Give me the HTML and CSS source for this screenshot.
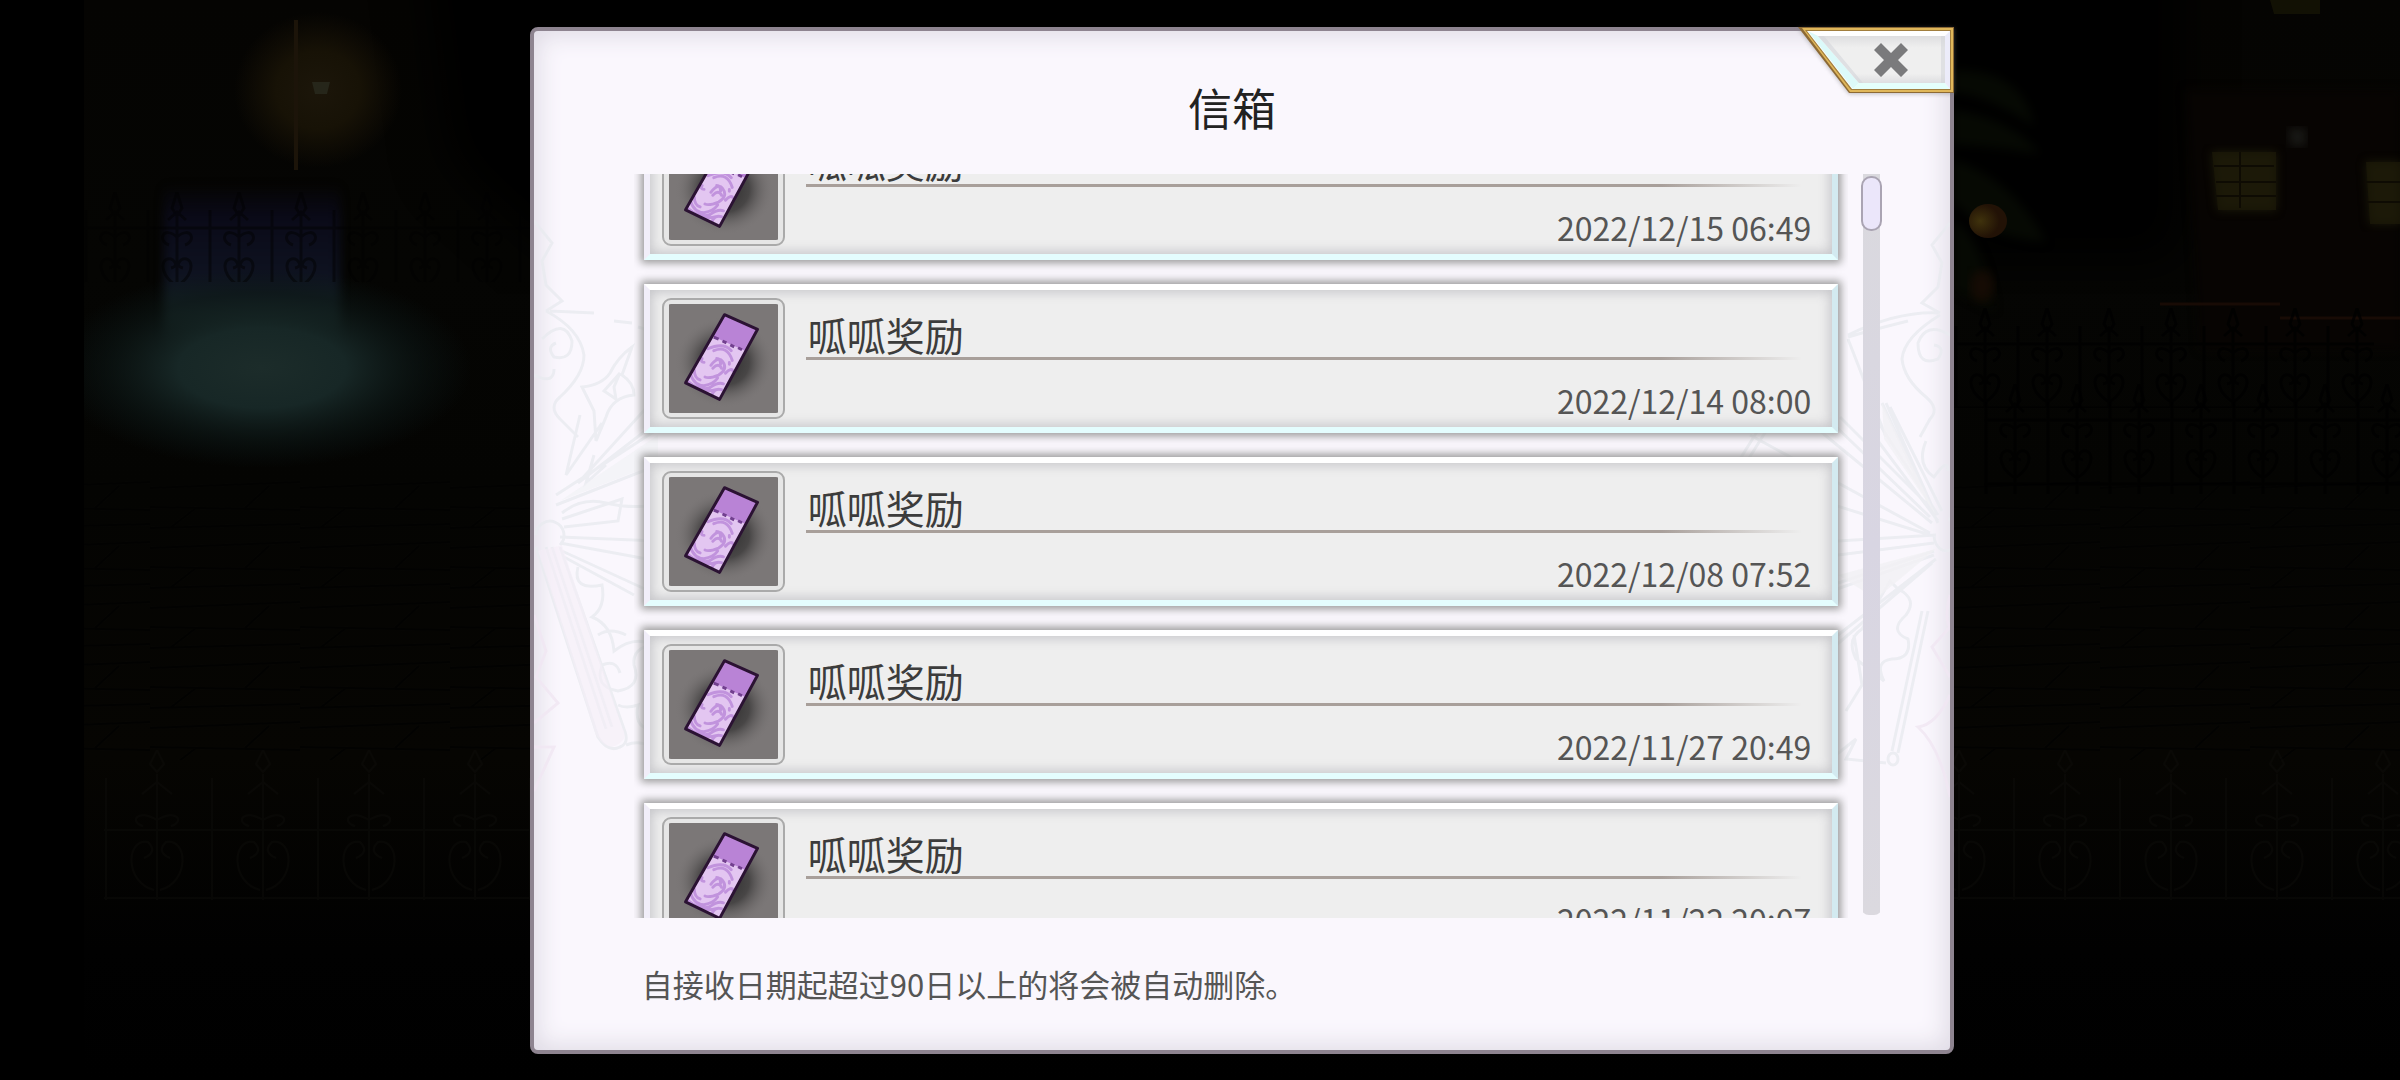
FILE: index.html
```html
<!DOCTYPE html>
<html lang="zh-CN">
<head>
<meta charset="utf-8">
<meta name="viewport" content="width=device-width, initial-scale=1">
<title>信箱</title>
<link rel="stylesheet" href="styles.css">
</head>
<body>
<svg class="scene" viewBox="0 0 2400 1080" preserveAspectRatio="xMidYMid slice" aria-hidden="true">
  <defs>
    <linearGradient id="ground" x1="0" y1="0" x2="0" y2="1">
      <stop offset="0" stop-color="#050402"/><stop offset=".25" stop-color="#050503"/><stop offset=".45" stop-color="#040402"/>
      <stop offset=".7" stop-color="#060502"/><stop offset=".88" stop-color="#010101"/><stop offset="1" stop-color="#000"/>
    </linearGradient>
    <radialGradient id="lamp"><stop offset="0" stop-color="#1c160a"/><stop offset=".5" stop-color="#171206"/><stop offset="1" stop-color="#171106" stop-opacity="0"/></radialGradient>
    <radialGradient id="pool"><stop offset="0" stop-color="#1c2c2a"/><stop offset=".4" stop-color="#172726"/><stop offset=".75" stop-color="#0c1615" stop-opacity=".6"/><stop offset="1" stop-color="#0a1414" stop-opacity="0"/></radialGradient>
    <radialGradient id="fruit" cx=".3"><stop offset="0" stop-color="#3f320c"/><stop offset="1" stop-color="#221206"/></radialGradient>
    <linearGradient id="veil" x1="0" y1="0" x2="0" y2="1">
      <stop offset="0" stop-color="#0b0a1c" stop-opacity="0"/><stop offset=".2" stop-color="#0a0a18"/><stop offset=".55" stop-color="#0e1220"/><stop offset=".8" stop-color="#182828"/><stop offset="1" stop-color="#182828" stop-opacity="0"/>
    </linearGradient>
    <filter id="soft" color-interpolation-filters="sRGB"><feGaussianBlur stdDeviation="5"/></filter>
    <filter id="haze" color-interpolation-filters="sRGB"><feGaussianBlur stdDeviation="26"/></filter>
    <clipPath id="view"><rect x="84" width="2316" height="1080"/></clipPath>
    <pattern id="fence" width="62" height="110" patternUnits="userSpaceOnUse">
      <path d="M31 0l-5 16 5 8 5-8zM31 20v90M0 36h62M0 100h62M2 18v92M31 45c-14-12-20 4-8 8M31 45c14-12 20 4 8 8M31 94c-22-14-14-32-4-26q6 6-2 8M31 94c22-14 14-32 4-26q-6 6 2 8M22 28l9-8 9 8" fill="none" stroke="#000" stroke-width="3"/>
    </pattern>
    <pattern id="rail" width="106" height="150" patternUnits="userSpaceOnUse">
      <path d="M53 0l-7 14 7 8 7-8zM53 24v126M0 80h106M0 148h106M2 28v122M53 70c-20-12-28 2-14 6M53 70c20-12 28 2 14 6M50 140c-30-8-28-52-6-48q10 10-4 16M56 140c30-8 28-52 6-48q-10 10 4 16M38 44l15-12 15 12" fill="none" stroke="#0e0d0a" stroke-width="2"/>
    </pattern>
    <pattern id="paving" width="150" height="60" patternUnits="userSpaceOnUse">
      <path d="M0 8l150-6M0 27l150 3M0 48l150-4M20 48l26-20M95 28l24-22" fill="none" stroke="#020201" stroke-width="2"/>
    </pattern>
  </defs>
  <rect width="2400" height="1080" fill="#000"/>
  <g clip-path="url(#view)">
    <rect x="84" width="2316" height="1080" fill="url(#ground)"/>
    <rect x="84" y="480" width="2316" height="280" fill="url(#paving)"/>
    <path d="M420 -80H2180V260H560L450 160z" fill="#000" filter="url(#haze)"/>
    <ellipse cx="318" cy="90" rx="84" ry="78" fill="url(#lamp)"/>
    <path d="M294 20h4v150h-4z" fill="#1c1409"/>
    <path d="M312 82h18l-3 12h-12z" fill="#26261a"/>
    <rect x="164" y="185" width="176" height="165" fill="url(#veil)" filter="url(#soft)"/>
    <ellipse cx="262" cy="368" rx="210" ry="100" fill="url(#pool)"/>
    <g transform="translate(84 192)" opacity=".45"><rect width="446" height="90" fill="url(#fence)"/></g>
    <path d="M2186 90h214v260h-200z" fill="#070402" filter="url(#soft)"/>
    <path d="M2212 152h64v58h-58zM2366 162h34v62h-30z" fill="#1c1a08" filter="url(#soft)"/>
    <path d="M2212 152h64v58h-58zM2366 162h34v62h-30z" fill="#1c1a08" opacity=".7"/>
    <path d="M2214 166h60M2216 182h60M2216 196h60M2240 152v56M2366 182h34M2366 202h34" stroke="#0e0b03" stroke-width="2"/>
    <path d="M2270 0h50v14h-46z" fill="#121104"/>
    <path d="M2288 128h18v18h-16z" fill="#181815" filter="url(#soft)"/>
    <path d="M2160 304h120M2280 318h120" stroke="#180b05" stroke-width="3"/>
    <g fill="#060903" filter="url(#soft)"><path d="M1954 70q70 0 80 56q-46-30-80-34zM1954 110q60 10 86 44q-50-8-86-10zM1954 160q60 20 92 82q-60-4-92-40zM1954 220q30 20 40 90l-40-20z"/></g>
    <ellipse cx="1988" cy="221" rx="19" ry="17" fill="url(#fruit)"/>
    <ellipse cx="1982" cy="286" rx="12" ry="16" fill="#150b04" filter="url(#soft)"/>
    <g transform="translate(1954 308)" opacity=".8"><rect width="420" height="100" fill="url(#fence)"/></g>
    <g transform="translate(1984 384)" opacity=".8"><rect width="416" height="110" fill="url(#fence)"/></g>
    <g transform="translate(104 750)"><rect width="2296" height="150" fill="url(#rail)" opacity=".45"/></g>
  </g>
</svg>
<main class="stage">
  <section class="panel" aria-labelledby="mail-title">
    <svg class="ornament ornament-left" viewBox="0 0 140 660" aria-hidden="true">
      <g fill="none" stroke="#e9ebf0" stroke-width="3">
        <path d="M0 26l18 22-10 18 4 24 16 16-16 10M12 116q34 18 38 44 0 20-24 42-12 10 0 22l18 18M8 144q22-22 30 2 0 20-18 16-8-10 2-14M0 180q20 10 20-6M16 116l44 2M80 126l18 2M104 132l20 6"/>
        <path d="M98 152l-10 28q12 8 12 20-22 2-28 22l-10 24-2-30q-8-16-12-24 20-2 28-14 8-16 22-26zM86 178l-6 14 2 12-12-8zM46 220l-14 60 36-52M124 200l-80 88 80-62M22 300l102-66M22 310l102-40M28 318q20-16 44-10t52 2M28 324l60-20-4 22-54 6M60 260l-8 28 20-18"/>
        <path d="M26 342l98 4M26 348l98 18M28 356l96 44M30 362l70 38" />
        <path d="M2 340a14 14 0 1 1 24 10M2 352l62 190q10 16 22 10 10-4 4-18L26 352M12 352l60 182M18 352l60 180"/>
        <path d="M44 372q-6 24 24 18 4 22-10 32 20 8 22 34 20-16 40-6-22 2-20 20 8 22-16 26-24-4-16-26 14-6 18 8M64 440q12-8 28 0M84 510q8 4 20 0-4 20 10 24M92 550q20-8 36 12"/>
      </g>
      <g fill="none" stroke="#f1e7f3" stroke-width="3"><path d="M0 420l12 36-10 26 22 26-24 20M0 552h20L0 596"/></g>
      <path d="M4 356l58 184q12 18 24 8 8-6 2-16L28 350z" fill="#f5edf7" opacity=".6"/>
      <path d="M26 306l98-66v28z" fill="#f0f1f4" opacity=".7"/>
    </svg>
    <svg class="ornament ornament-right" viewBox="0 0 400 660" aria-hidden="true">
      <g fill="none" stroke="#e9ebf0" stroke-width="3">
        <path d="M400 28l-18 22 10 18-4 24-16 16 18 10M388 118q-40-2-90 22M298 142q20-6 60-16M298 144l38 98M390 120q-36 22-38 44 2 20 24 38 14 12 4 22l-10 18M400 140q-24-14-32 8 0 24 20 16 8-12-4-14"/>
        <path d="M332 208l56 120M336 208l50 112M340 212l52 104M330 230l58 90M328 246l60 80M376 246q-10 24 8 36 14-20 14-6M290 222l90 90M280 226l100 96M270 236l112 92M200 240l180 98M220 290l160 50M288 346l98-6M288 360l96-12M288 388l96-32M270 400l114-40M288 440l98-76M270 464l112-96M384 340a12 16 0 1 0 14-16M180 280l30-48M186 284l30-48"/>
        <path d="M340 386l-28 48q-16 10-6 30l28 22q-10-20 8-22 20 0 16-20-20-8-2-24 12-16-8-26zM304 440l8 50-16 26M372 416l-30 140M378 416l-30 142M338 564a5 6 0 1 0 10 0 5 6 0 1 0-10 0M286 560l20-16-10 20 40 4"/>
      </g>
      <g fill="none" stroke="#f1e7f3" stroke-width="3"><path d="M400 400q-6 24 0 32l-18 20 18 30M400 500q-14 30-32 32 22 20 32 70"/></g>
      <path d="M332 208l54 112-52-76zM288 380l98-26-60 50z" fill="#f0f0f3" opacity=".8"/>
    </svg>
    <header class="panel-head">
      <h1 class="panel-title" id="mail-title">信箱</h1>
      <button class="close" type="button" aria-label="关闭">
        <svg viewBox="0 0 156 66" aria-hidden="true">
          <defs><linearGradient id="face" x1="0" y1="0" x2="0" y2="1"><stop offset="0" stop-color="#dedee0"/><stop offset=".25" stop-color="#efefef"/><stop offset=".8" stop-color="#efefef"/><stop offset="1" stop-color="#dedee0"/></linearGradient></defs>
          <path d="M0 0H156V66H51z" fill="#8d6a35"/>
          <path d="M4 1H155V65H52z" fill="#e0b75a"/>
          <path d="M7 3H153V63H53z" fill="#a17e3e"/>
          <path d="M9 4H152V62H54z" fill="#fff"/>
          <path d="M10 4l45 58 6-6L20 9z" fill="#dcfafa"/>
          <path d="M55 62h97l-5-6H61z" fill="#e4fffb"/>
          <path d="M152 4v58l-5-6V9z" fill="#ececfa"/>
          <path d="M20 9H147V56H61z" fill="url(#face)"/>
          <path d="M20 9l41 47h4L26 9zM147 9v47h-4V9z" fill="#d3d5da" opacity=".6"/>
          <path d="M83 16l10 10 10-10 7 7-10 10 10 10-7 7-10-10-10 10-7-7 10-10-10-10z" fill="#7a7a7c"/>
        </svg>
      </button>
    </header>
    <div class="mail">
      <ul class="mail-list">
        <li class="card"><svg class="item" viewBox="0 0 112 112"><use href="#ticket"/></svg><div class="info"><h2>呱呱奖励</h2><time datetime="2022-12-15T06:49">2022/12/15 06:49</time></div></li>
        <li class="card"><svg class="item" viewBox="0 0 112 112"><use href="#ticket"/></svg><div class="info"><h2>呱呱奖励</h2><time datetime="2022-12-14T08:00">2022/12/14 08:00</time></div></li>
        <li class="card"><svg class="item" viewBox="0 0 112 112"><use href="#ticket"/></svg><div class="info"><h2>呱呱奖励</h2><time datetime="2022-12-08T07:52">2022/12/08 07:52</time></div></li>
        <li class="card"><svg class="item" viewBox="0 0 112 112"><use href="#ticket"/></svg><div class="info"><h2>呱呱奖励</h2><time datetime="2022-11-27T20:49">2022/11/27 20:49</time></div></li>
        <li class="card"><svg class="item" viewBox="0 0 112 112"><use href="#ticket"/></svg><div class="info"><h2>呱呱奖励</h2><time datetime="2022-11-22T20:07">2022/11/22 20:07</time></div></li>
      </ul>
      <div class="track"><div class="thumb"></div></div>
    </div>
    <footer class="note"><p>自接收日期起超过90日以上的将会被自动删除。</p></footer>
  </section>
</main>
<svg class="symbols" aria-hidden="true">
  <defs>
    <radialGradient id="shade"><stop offset="0" stop-color="#2e2d2d"/><stop offset=".5" stop-color="#484646"/><stop offset="1" stop-color="#7b7777" stop-opacity="0"/></radialGradient>
    <clipPath id="stub"><path d="M57 11L91 26 52 98 17 81z"/></clipPath>
    <symbol id="ticket" viewBox="0 0 112 112">
      <rect width="112" height="112" fill="#7b7777"/>
      <ellipse cx="57" cy="60" rx="51" ry="47" fill="url(#shade)"/>
      <g clip-path="url(#stub)">
        <path d="M57 11L91 26 52 98 17 81z" fill="#e3c6f1"/>
        <path d="M57 11L91 26 78 48 44 33z" fill="#b983d6"/>
        <g fill="none" stroke="#c193dd" stroke-width="3" stroke-linecap="round">
          <path d="M46 48q14-6 19 10M40 46q16-7 24 2M43 63q8-10 12-4 6 8-4 14-10 4-14 2M45 66q6-6 9 0M53 62q0-6-4-6M58 71q6-6 8-2M34 56q-2 4 2 4M62 60v2M22 72q4 12 14 12 10-2 14-8M20 80q12 10 22 6 8-6 14-4M26 68q0 8 6 10M44 94q2-8 10-6M32 88q10 2 16 0"/>
        </g>
      </g>
      <path d="M46 34l5 2m4 2l4 2m4 2l4 2m4 1l4 2" stroke="#72408f" stroke-width="3"/>
      <path d="M57 11L91 26 52 98 17 81z" fill="none" stroke="#2b1233" stroke-width="3" stroke-linejoin="round"/>
    </symbol>
  </defs>
</svg>
</body>
</html>
```
FILE: styles.css
```css
* {
  box-sizing: border-box;
}

body {
  margin: 0;
  background: #000;
  color: #444;
  font-family: "Noto Sans CJK SC", "Noto Sans", sans-serif;
}

h1,
h2,
p,
ul {
  margin: 0;
  padding: 0;
  font-weight: 400;
}

.scene {
  position: fixed;
  inset: 0;
  width: 100%;
  height: 100%;
}

.symbols {
  position: absolute;
  width: 0;
  height: 0;
}

.stage {
  position: relative;
  display: flex;
  justify-content: center;
  height: 100vh;
  min-height: 600px;
  padding: 27px 0 26px 84px;
}

.panel {
  position: relative;
  display: flex;
  flex-direction: column;
  width: 61.5%;
  min-width: 900px;
  border: 4px solid #8e8490;
  border-radius: 8px;
  background: #faf7fd;
  box-shadow: inset 0 0 24px 4px #dedae4;
}

.ornament {
  position: absolute;
  top: 164px;
  height: 660px;
  opacity: .8;
}

.ornament-left {
  left: 0;
}

.ornament-right {
  right: 0;
}

.panel-head {
  flex: none;
  height: 143px;
  padding: 46px 20px 0 0;
  text-align: center;
}

.panel-title {
  color: #222;
  font-size: 44px;
  line-height: 60px;
}

.close {
  position: absolute;
  top: -4px;
  right: -4px;
  width: 156px;
  height: 66px;
  padding: 0;
  border: 0;
  background: none;
  filter: drop-shadow(0 1px 2px #7777);
  cursor: pointer;
}

.close svg {
  display: block;
}

.mail {
  position: relative;
  display: flex;
  flex: 1;
  gap: 13px;
  min-height: 0;
  padding: 0 68px 0 100px;
}

.mail-list {
  display: flex;
  flex: 1;
  flex-direction: column;
  gap: 24px;
  padding: 0 10px;
  overflow: hidden;
  list-style: none;
}

.card {
  display: flex;
  flex: none;
  gap: 21px;
  height: 149px;
  padding: 8px 21px 0 12px;
  border: 6px solid;
  border-color: #fff #d3eaf0 #e4fdfe #f1eef9;
  background: #eee;
  box-shadow: 0 0 8px 3px #999, inset 0 0 12px 2px #c4c4c8;
}

/* the list opens scrolled part way into its first card */
.card:first-child {
  margin-top: -63px;
}

.item {
  flex: none;
  width: 123px;
  height: 121px;
  padding: 4px;
  border: 2px solid #aaa;
  border-radius: 9px;
  background: #e6e6e6;
}

.info {
  flex: 1;
  padding-top: 13px;
}

.info h2 {
  padding-left: 2px;
  border-bottom: 3px solid;
  border-image: linear-gradient(90deg, #a89f9a 0 85%, #a89f9a00 99%) 1;
  color: #3c3c3c;
  font-size: 39px;
  line-height: 46px;
}

.info time {
  display: block;
  margin-top: 20px;
  color: #555;
  font-size: 32px;
  line-height: 40px;
  text-align: right;
}

.track {
  width: 21px;
  margin-bottom: 3px;
  padding-top: 2px;
  border-radius: 0 0 8px 8px;
  background: linear-gradient(#dad9de, #d8d5e2 50%, #dbd9df) center / 17px 100% no-repeat;
}

.thumb {
  height: 55px;
  border: 2px solid #aaa4b3;
  border-radius: 10px;
  background: #ebe6fa;
}

.note {
  flex: none;
  height: 132px;
  padding: 43px 108px 0;
  color: #555;
  font-size: 31px;
  line-height: 46px;
}
```
